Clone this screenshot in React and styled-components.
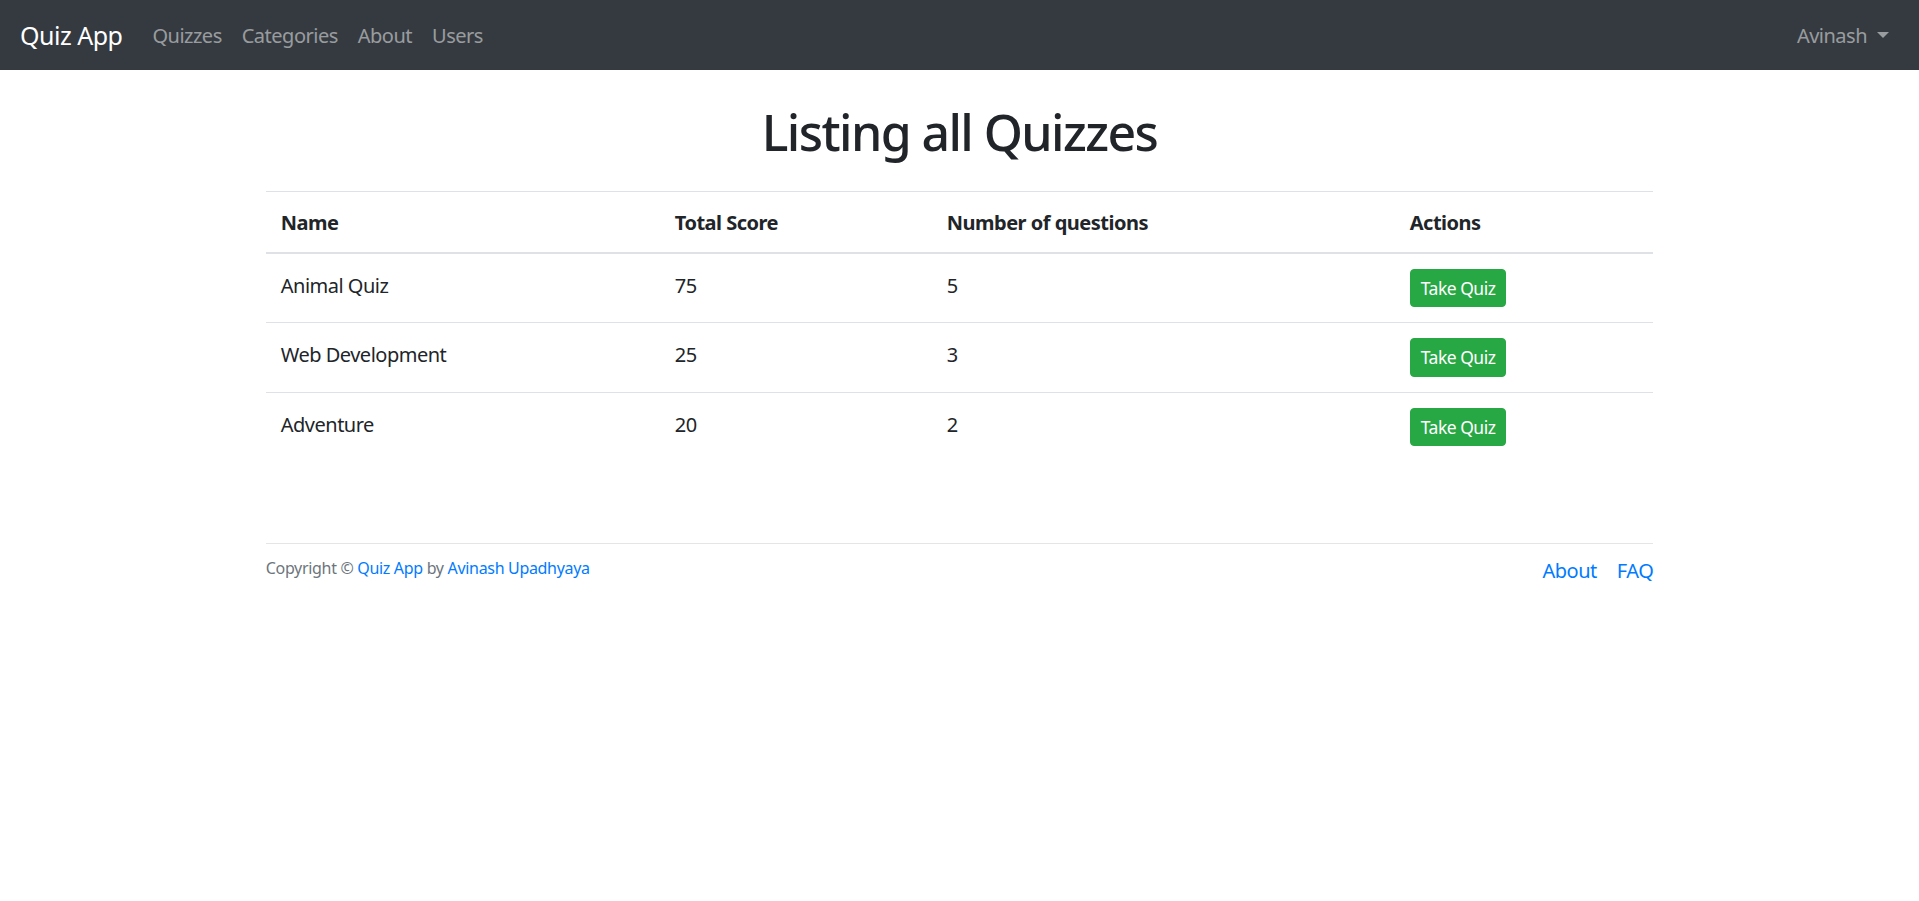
import React from "react";
import styled, { createGlobalStyle } from "styled-components";

const GlobalStyle = createGlobalStyle`
  body {
    margin: 0;
    font-family: "Noto Sans", "Open Sans", Arial, sans-serif;
    font-size: 20px;
    line-height: 1.5;
    letter-spacing: -0.025em;
    color: #212529;
    background: #fff;
  }
  * { box-sizing: border-box; }
`;

const quizzes = [
  { name: "Animal Quiz", score: 75, questions: 5 },
  { name: "Web Development", score: 25, questions: 3 },
  { name: "Adventure", score: 20, questions: 2 },
];

const Navbar = styled.nav`
  height: 70px;
  background-color: #343a40;
  display: flex;
  align-items: center;
  padding: 2px 20px 0;
`;

const Brand = styled.a`
  color: #fff;
  font-size: 25px;
  line-height: 1.5;
  margin-right: 20px;
  text-decoration: none;
`;

const NavList = styled.div`
  display: flex;
  flex: 1;
`;

const NavLink = styled.a`
  color: rgba(255, 255, 255, 0.5);
  padding: 0 10px;
  font-size: 20px;
  text-decoration: none;
`;

const UserMenu = styled.a`
  display: flex;
  align-items: center;
  color: rgba(255, 255, 255, 0.5);
  padding: 0 10px;
  text-decoration: none;
`;

const Caret = styled.span`
  display: inline-block;
  margin-left: 10px;
  margin-bottom: 2px;
  border-top: 6px solid rgba(255, 255, 255, 0.5);
  border-left: 6px solid transparent;
  border-right: 6px solid transparent;
`;

const Container = styled.main`
  width: 1425px;
  margin: 0 auto;
  padding: 0 18.75px;
`;

const Title = styled.h1`
  margin: 32px 0 29px;
  font-size: 50px;
  font-weight: 500;
  line-height: 1.2;
  letter-spacing: -0.032em;
  text-align: center;
`;

const Table = styled.table`
  width: 100%;
  table-layout: fixed;
  border-collapse: collapse;
`;

const Th = styled.th`
  text-align: left;
  font-weight: 700;
  padding: 16px 15px 14px;
  border-top: 1px solid #dee2e6;
  border-bottom: 2px solid #dee2e6;
`;

const Td = styled.td`
  padding: 15px;
  border-top: 1px solid #dee2e6;
  vertical-align: ${(p) => (p.$button ? "middle" : "top")};
  padding-top: ${(p) => (p.$button ? "15px" : "17px")};
  padding-bottom: ${(p) => (p.$button ? "15px" : "13px")};
`;

const TakeButton = styled.button`
  font-family: inherit;
  letter-spacing: inherit;
  font-size: 17.5px;
  line-height: 1.5;
  padding: 5px 10px;
  color: #fff;
  background-color: #28a745;
  border: 1px solid #28a745;
  border-radius: 4px;
  cursor: pointer;
  vertical-align: middle;
`;

const Footer = styled.footer`
  margin-top: 82px;
  border-top: 1px solid rgba(0, 0, 0, 0.1);
  padding-top: 10px;
  display: flex;
  justify-content: space-between;
  align-items: flex-start;
`;

const Copyright = styled.small`
  font-size: 16px;
  line-height: 1.5;
  padding-top: 2px;
  letter-spacing: -0.02em;
  color: #6c757d;
`;

const Link = styled.a`
  color: #007bff;
  text-decoration: none;
`;

const FooterLinks = styled.div`
  display: flex;
  gap: 20px;
  font-size: 20px;
  padding-top: 2px;
`;

export default function App() {
  return (
    <>
      <GlobalStyle />
      <Navbar>
        <Brand href="#">Quiz App</Brand>
        <NavList>
          <NavLink href="#">Quizzes</NavLink>
          <NavLink href="#">Categories</NavLink>
          <NavLink href="#">About</NavLink>
          <NavLink href="#">Users</NavLink>
        </NavList>
        <UserMenu href="#">
          Avinash
          <Caret />
        </UserMenu>
      </Navbar>
      <Container>
        <Title>Listing all Quizzes</Title>
        <Table>
          <colgroup>
            <col style={{ width: 394 }} />
            <col style={{ width: 272 }} />
            <col style={{ width: 463 }} />
            <col />
          </colgroup>
          <thead>
            <tr>
              <Th>Name</Th>
              <Th>Total Score</Th>
              <Th>Number of questions</Th>
              <Th>Actions</Th>
            </tr>
          </thead>
          <tbody>
            {quizzes.map((q) => (
              <tr key={q.name}>
                <Td>{q.name}</Td>
                <Td>{q.score}</Td>
                <Td>{q.questions}</Td>
                <Td $button>
                  <TakeButton>Take Quiz</TakeButton>
                </Td>
              </tr>
            ))}
          </tbody>
        </Table>
        <Footer>
          <Copyright>
            Copyright © <Link href="#">Quiz App</Link> by{" "}
            <Link href="#">Avinash Upadhyaya</Link>
          </Copyright>
          <FooterLinks>
            <Link href="#">About</Link>
            <Link href="#">FAQ</Link>
          </FooterLinks>
        </Footer>
      </Container>
    </>
  );
}
